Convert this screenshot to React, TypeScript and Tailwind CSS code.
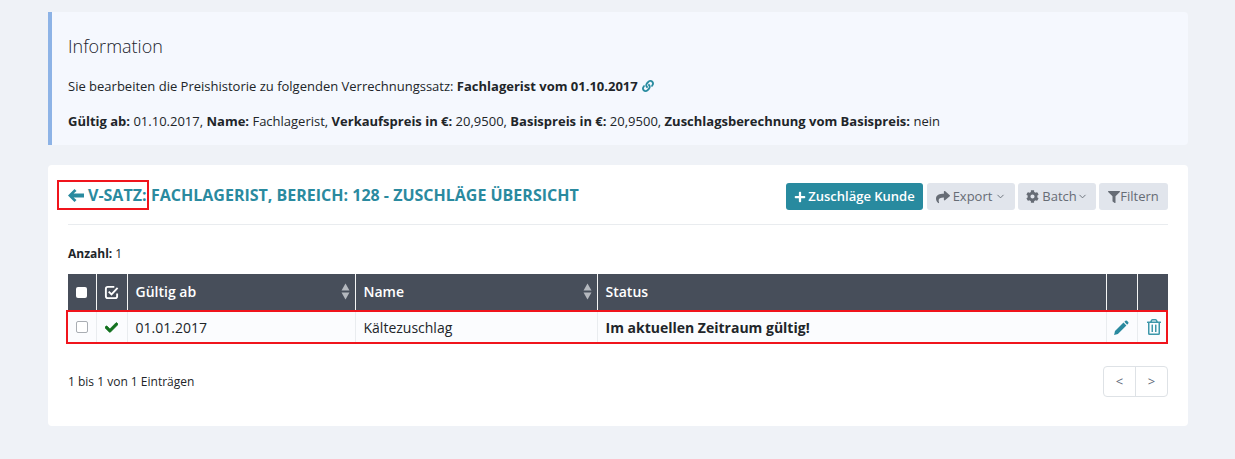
import React from "react";
import { FaCheck, FaCog, FaFilter, FaLink, FaPlus, FaRegTrashAlt, FaShare } from "react-icons/fa";
import { LuChevronDown } from "react-icons/lu";

function SortIcon() {
  return (
    <svg viewBox="0 0 9 17" className="h-[17px] w-[9px] text-[#b4b8be]" fill="currentColor">
      <path d="M4.5 0.5L8.5 7.5H0.5z" />
      <path d="M0.5 9.5H8.5L4.5 16.5z" />
    </svg>
  );
}

export default function App() {
  return (
    <div className="h-[459px] w-full overflow-hidden bg-[#eff2f7] pl-[48px] pr-[47px] pt-[12px] font-['Open_Sans',sans-serif] text-[13px] text-[#212529]">
      {/* Info box */}
      <div className="h-[133px] rounded-r-[4px] border-l-[4px] border-[#8db3e6] bg-[#f5f8fe] pl-[16px] pr-4 pt-[22px]">
        <h4 className="text-[18px] font-light leading-[24px] text-[#1a222b]">Information</h4>
        <p className="mt-[18px] flex items-center leading-[20px]">
          <span>Sie bearbeiten die Preishistorie zu folgenden Verrechnungssatz:&nbsp;</span>
          <b>Fachlagerist vom 01.10.2017</b>
          <FaLink className="ml-[4px] text-[12px] text-[#2a8ca0]" />
        </p>
        <p className="mt-[15px] leading-[20px]">
          <b>Gültig ab:</b> 01.10.2017, <b>Name:</b> Fachlagerist, <b>Verkaufspreis in €:</b> 20,9500,{" "}
          <b>Basispreis in €:</b> 20,9500, <b>Zuschlagsberechnung vom Basispreis:</b> nein
        </p>
      </div>

      {/* Main card */}
      <div className="mt-[20px] h-[261px] rounded-[4px] bg-white px-[20px] pt-[15px]">
        <div className="flex h-[45px] items-start justify-between border-b border-[#e9ecef]">
          <h3 className="-ml-[11px] flex items-center text-[16px] font-bold leading-[28px] text-[#2a8a9f]">
            <span className="flex h-[30px] w-[92px] items-center border-2 border-[#f0141c] pl-[9px]">
              <svg viewBox="0 0 16 13" className="mr-[4px] h-[13px] w-[16px]" fill="currentColor">
                <path d="M0 6.5L6.5 0L8.5 2L5.6 4.5H16V8.5H5.6L8.5 11L6.5 13z" />
              </svg>
              V-SATZ:
            </span>
            <span className="ml-[2px]">FACHLAGERIST, BEREICH: 128 - ZUSCHLÄGE ÜBERSICHT</span>
          </h3>
          <div className="mt-[3px] flex h-[27px] gap-[3px] text-[13px] text-[#666c75]">
            <button className="mr-[1px] flex w-[137px] items-center justify-center rounded-[3px] bg-[#288a9f] font-semibold text-white">
              <FaPlus className="mr-[2px] text-[12px]" />
              Zuschläge Kunde
            </button>
            <button className="flex w-[88px] items-center justify-center rounded-[3px] bg-[#e1e5ec]">
              <FaShare className="mr-[3px] text-[14px]" />
              Export
              <LuChevronDown className="ml-[3px] text-[11px]" />
            </button>
            <button className="flex w-[78px] items-center justify-center rounded-[3px] bg-[#e1e5ec]">
              <FaCog className="mr-[3px] text-[13px]" />
              Batch
              <LuChevronDown className="text-[11px]" />
            </button>
            <button className="flex w-[69px] items-center justify-center rounded-[3px] bg-[#e1e5ec]">
              <FaFilter className="text-[12px]" />
              Filtern
            </button>
          </div>
        </div>

        <div className="mt-[20px] text-[12px] leading-[18px]">
          <b>Anzahl:</b> 1
        </div>

        <div className="relative mt-[11px] w-[1100px]">
          <table className="w-full table-fixed border-collapse text-[14px]">
            <colgroup>
              <col className="w-[28px]" />
              <col className="w-[31px]" />
              <col className="w-[228px]" />
              <col className="w-[242px]" />
              <col />
              <col className="w-[31px]" />
              <col className="w-[31px]" />
            </colgroup>
            <thead>
              <tr className="h-[36px] bg-[#474e5a] text-left text-white">
                <th className="border-r border-[#f5f5f5] text-center">
                  <span className="mx-auto block h-[11px] w-[11px] rounded-[2px] bg-white" />
                </th>
                <th className="border-r border-[#f5f5f5]">
                  <svg viewBox="0 0 16 16" className="mx-auto h-[15px] w-[15px]" fill="none" stroke="currentColor" strokeWidth="2">
                    <path d="M11 2H4a2 2 0 0 0-2 2v8a2 2 0 0 0 2 2h8a2 2 0 0 0 2-2V9" />
                    <path d="M5 7l3 3 6.5-7" />
                  </svg>
                </th>
                <th className="border-r border-[#f5f5f5] pb-[2px] pl-[8px] pr-[5px] font-semibold">
                  <div className="flex items-center justify-between">
                    Gültig ab
                    <SortIcon />
                  </div>
                </th>
                <th className="border-r border-[#f5f5f5] pb-[2px] pl-[8px] pr-[5px] font-semibold">
                  <div className="flex items-center justify-between">
                    Name
                    <SortIcon />
                  </div>
                </th>
                <th className="border-r border-[#f5f5f5] pb-[2px] pl-[8px] font-semibold">Status</th>
                <th className="border-r border-[#f5f5f5]"></th>
                <th></th>
              </tr>
            </thead>
            <tbody>
              <tr className="h-[34px] bg-[#fbfcfe]">
                <td className="border-r border-[#e9ecef] text-center">
                  <span className="mx-auto block h-[12px] w-[12px] rounded-[2px] border border-[#a9adb3] bg-white" />
                </td>
                <td className="border-r border-[#e9ecef]">
                  <FaCheck className="mx-auto text-[13px] text-[#13711f]" stroke="currentColor" strokeWidth="30" />
                </td>
                <td className="border-r border-[#e9ecef] pl-[8px]">01.01.2017</td>
                <td className="border-r border-[#e9ecef] pl-[8px]">Kältezuschlag</td>
                <td className="border-r border-[#e9ecef] pl-[8px] font-bold">Im aktuellen Zeitraum gültig!</td>
                <td className="border-r border-[#e9ecef]">
                  <svg viewBox="0 0 16 16" className="mx-auto h-[17px] w-[17px] text-[#2a8a9f]" fill="currentColor">
                    <path d="M1 15l.9-3.6 8-8 2.7 2.7-8 8z" />
                    <path d="M10.7 2.7l1-1a1 1 0 0 1 1.4 0l1.2 1.2a1 1 0 0 1 0 1.4l-1 1z" />
                  </svg>
                </td>
                <td>
                  <FaRegTrashAlt className="mx-auto translate-x-[1px] text-[16px] text-[#3d97aa]" />
                </td>
              </tr>
            </tbody>
          </table>
          {/* red highlight around the row */}
          <div className="pointer-events-none absolute -left-[2px] right-0 top-[36px] h-[34px] border-2 border-[#f0141c]" />
        </div>

        <div className="mt-[22px] flex items-center justify-between text-[12px]">
          <span>1 bis 1 von 1 Einträgen</span>
          <div className="flex h-[31px] w-[65px] rounded-[4px] border border-[#dee2e6] text-[13px] text-[#5f6b7a]">
            <span className="flex flex-1 items-center justify-center border-r border-[#dee2e6]">&lt;</span>
            <span className="flex flex-1 items-center justify-center">&gt;</span>
          </div>
        </div>
      </div>
    </div>
  );
}
